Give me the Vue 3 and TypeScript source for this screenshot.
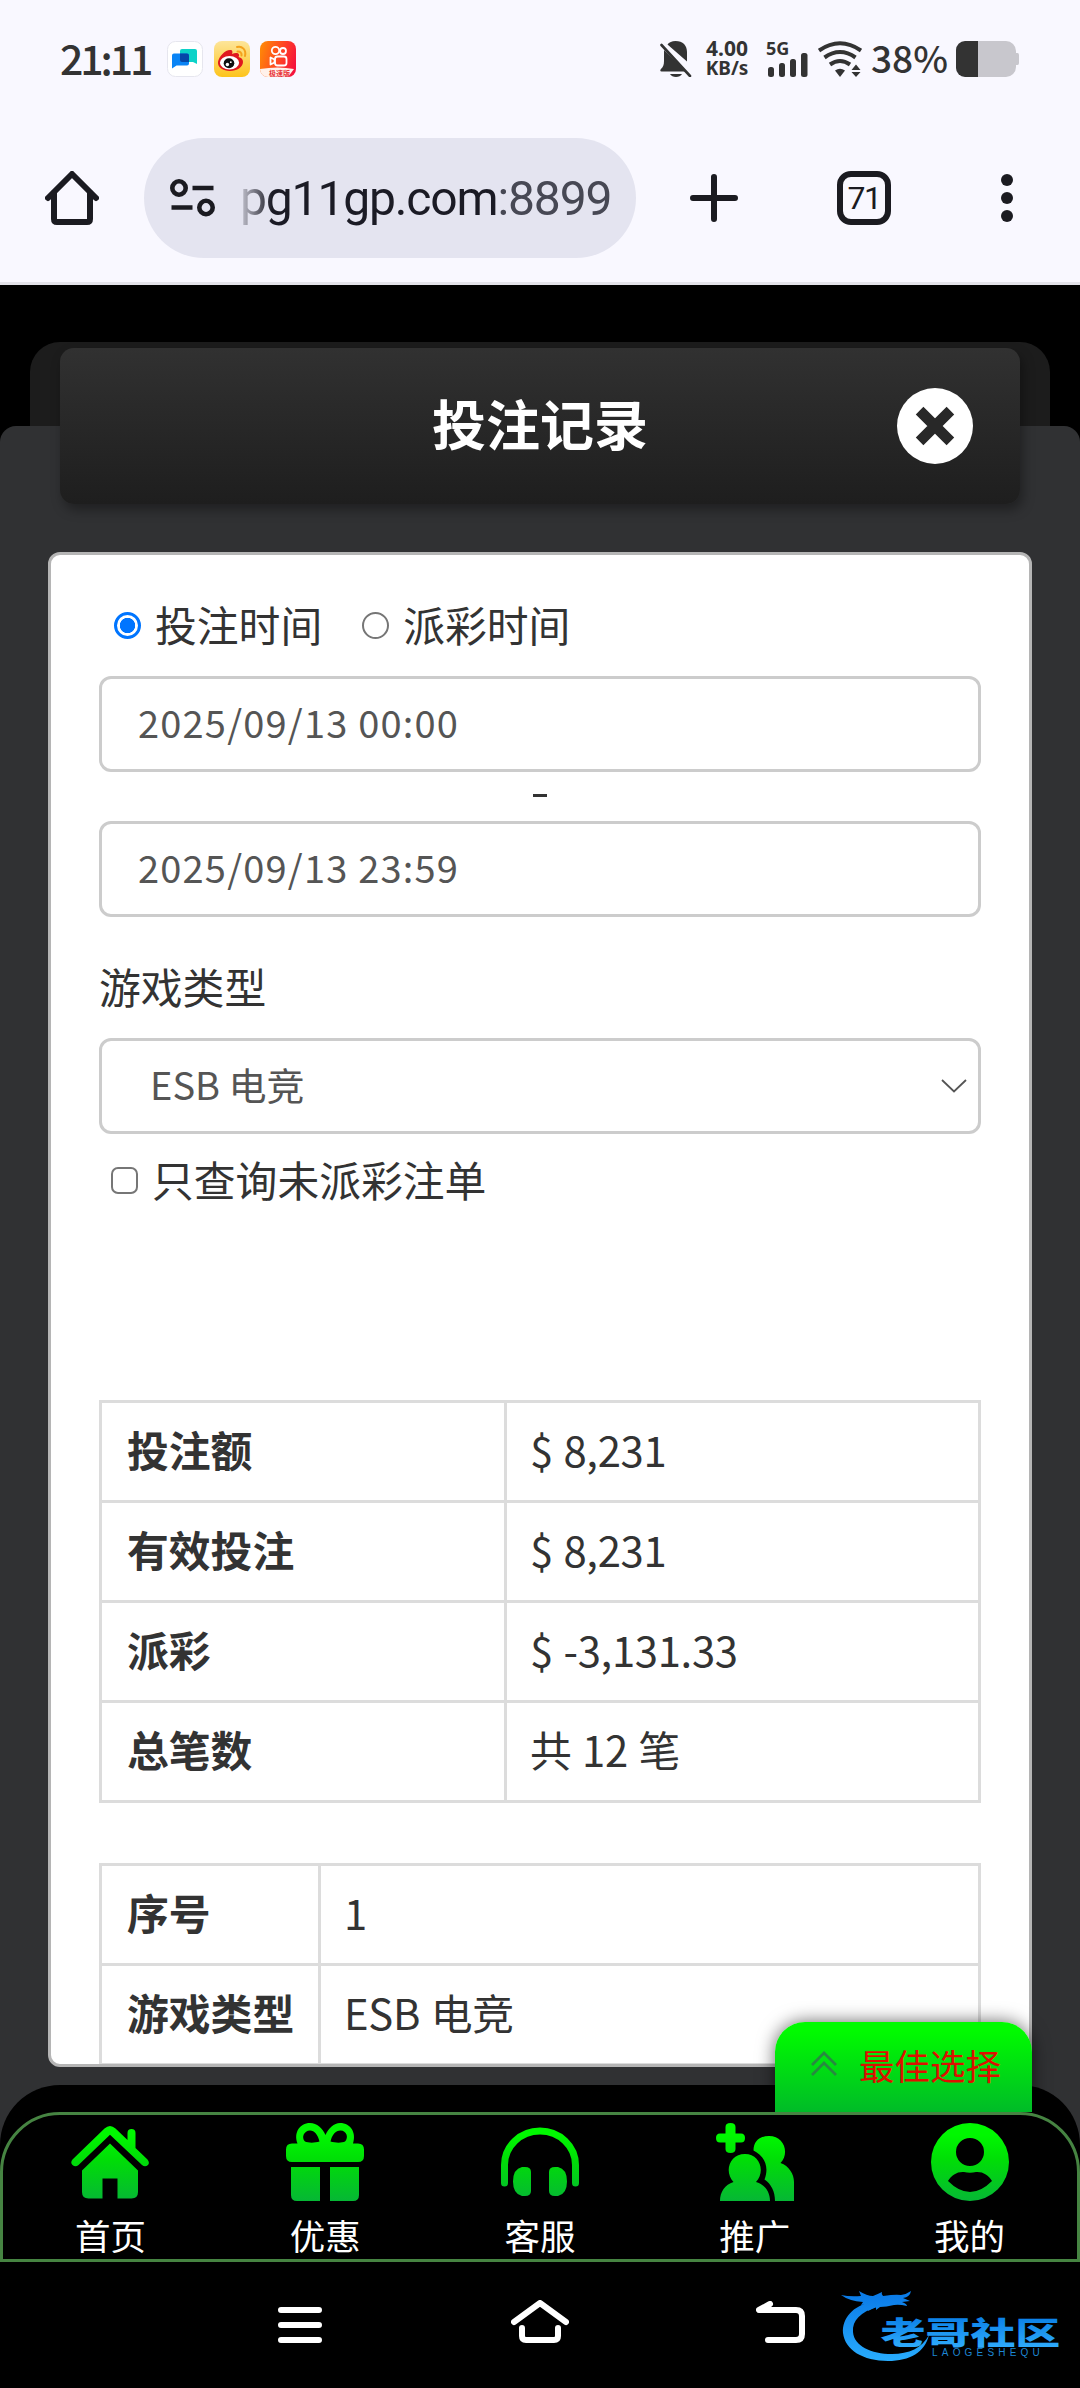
<script setup lang="ts">
import { ref } from 'vue'

interface Row {
  label: string
  value: string
}

const timeMode = ref<'bet' | 'payout'>('bet')
const unpaidOnly = ref(false)

const summary: Row[] = [
  { label: '投注额', value: '$ 8,231' },
  { label: '有效投注', value: '$ 8,231' },
  { label: '派彩', value: '$ -3,131.33' },
  { label: '总笔数', value: '共 12 笔' },
]

const record: Row[] = [
  { label: '序号', value: '1' },
  { label: '游戏类型', value: 'ESB 电竞' },
]

const tabs: { icon: string; label: string }[] = [
  { icon: 'home', label: '首页' },
  { icon: 'gift', label: '优惠' },
  { icon: 'service', label: '客服' },
  { icon: 'promote', label: '推广' },
  { icon: 'mine', label: '我的' },
]
</script>

<template>
  <div class="screen">
    <header class="chrome">
      <div class="status">
        <span class="clock">21:11</span>
        <svg class="app-icon" viewBox="0 0 36 36">
          <rect x="0.5" y="0.5" width="35" height="35" rx="8" fill="#fff" stroke="#e6e6ee" />
          <path d="M15 8h13a2 2 0 0 1 2 2v13l-4-2H15a2 2 0 0 1-2-2v-9a2 2 0 0 1 2-2z" fill="#0cd2c8" />
          <path d="M7 12.500h13a2 2 0 0 1 2 2v8a2 2 0 0 1-2 2H9.500L5 27.500v-13a2 2 0 0 1 2-2z" fill="#0a84f5" />
          <path d="M13 12.500h7a2 2 0 0 1 2 2V21h-7a2 2 0 0 1-2-2z" fill="#0547a8" />
        </svg>
        <svg class="app-icon" viewBox="0 0 36 36">
          <defs>
            <linearGradient id="wb" x1="0" y1="0" x2="0" y2="1">
              <stop offset="0" stop-color="#fde59a" />
              <stop offset="1" stop-color="#fdc41c" />
            </linearGradient>
          </defs>
          <rect width="36" height="36" rx="8" fill="url(#wb)" />
          <path d="M4 21c1-6 8-13 13-12 2 .6 1.500 3 1 4 3-1.500 7-1.500 7 1 0 1 0 1.500-.5 2 3 .8 4.500 2.500 4.500 5 0 5-6 9-13 9-7 0-12.500-3.500-12-9z" fill="#e0181e" />
          <ellipse cx="15.500" cy="21.800" rx="9.600" ry="6.700" fill="#fff" />
          <ellipse cx="15" cy="22.300" rx="5.300" ry="5" fill="#111" />
          <circle cx="13.400" cy="23.500" r="1.700" fill="#fff" />
          <circle cx="16.800" cy="21.200" r="0.900" fill="#fff" />
          <path d="M23 6c5-1.500 9.500 3 8 9M23.500 10.500c2.500-.5 4.500 1.500 4 4" fill="none" stroke="#f4a21c" stroke-width="2" stroke-linecap="round" />
        </svg>
        <svg class="app-icon" viewBox="0 0 36 36">
          <defs>
            <linearGradient id="ks" x1="0" y1="0.300" x2="1" y2="0.600">
              <stop offset="0" stop-color="#ff8508" />
              <stop offset="0.600" stop-color="#ff3f26" />
              <stop offset="1" stop-color="#f5133c" />
            </linearGradient>
            <clipPath id="ksc"><rect width="36" height="36" rx="8" /></clipPath>
          </defs>
          <g clip-path="url(#ksc)">
            <rect width="36" height="36" fill="url(#ks)" />
            <path d="M0 28q18-3 34 0l-6 8H0z" fill="#fff1ea" />
            <g fill="none" stroke="#fff" stroke-width="1.800">
              <circle cx="15.500" cy="9.500" r="3.700" />
              <circle cx="23" cy="10" r="3" />
              <rect x="15" y="15.500" width="11.500" height="9" rx="2.500" />
              <path d="M14.500 18.500l-4-2v7l4-2z" stroke-linejoin="round" />
            </g>
            <text x="9" y="34.500" class="ks-label">极速版</text>
          </g>
        </svg>
        <span class="grow"></span>
        <svg class="bell" viewBox="0 0 32 36">
          <path d="M7.500 3.500C9 1.500 12 0 15.500 0 23 0 27 4.500 27 11v9.500zM4 9l22 21.500H1.500C0 30.500 0 29 1 28c2-2 3-4 3-8zM10 33h12c-1 2-3.500 3-6 3s-5-1-6-3z" fill="#333" />
          <path d="M1.500 4l28.500 31" stroke="#333" stroke-width="2.600" stroke-linecap="round" />
        </svg>
        <div class="speed"><span>4.00</span><span class="unit">KB/s</span></div>
        <div class="signal">
          <span>5G</span>
          <svg viewBox="0 0 40 24">
            <g fill="#333">
              <rect x="0" y="14" width="6" height="10" rx="2.500" />
              <rect x="11" y="10" width="6" height="14" rx="2.500" />
              <rect x="22" y="6" width="6" height="18" rx="2.500" />
              <rect x="33" y="0" width="6.500" height="24" rx="2.500" />
            </g>
          </svg>
        </div>
        <svg class="wifi" viewBox="0 0 44 36">
          <g fill="none" stroke="#333" stroke-width="4">
            <path d="M1 9.500Q22-5 43 9.500" />
            <path d="M6.500 16.500Q22 5.500 37.500 16.500" />
            <path d="M12 23.500Q22 16.500 32 23.500" />
          </g>
          <path d="M17 29.500q5-3.500 10 0L22 36z" fill="#333" />
          <path d="M33.500 29h9L38 23.500zM33.500 31h9L38 36z" fill="#333" />
        </svg>
        <span class="percent">38%</span>
        <svg class="battery" viewBox="0 0 63 36">
          <path d="M22 0h28a10 10 0 0 1 10 10v2h1.500q1.500 0 1.500 2v8q0 2-1.500 2H60v2a10 10 0 0 1-10 10H22z" fill="#c8c7cd" />
          <path d="M22 0v36H9a9 9 0 0 1-9-9V9a9 9 0 0 1 9-9z" fill="#333" />
        </svg>
      </div>

      <div class="toolbar">
        <svg class="tb-home" viewBox="0 0 54 54" fill="none" stroke="#1b1b21" stroke-width="6" stroke-linecap="round" stroke-linejoin="round">
          <path d="M3 27L27 3l24 24" />
          <path d="M9 22v26q0 3 3 3h30q3 0 3-3V22" />
        </svg>
        <div class="omnibox">
          <svg class="tune" viewBox="0 0 46 40" fill="none" stroke="#1b1b21">
            <circle cx="9" cy="10" r="6.700" stroke-width="4.600" />
            <circle cx="36" cy="29.500" r="6.700" stroke-width="4.600" />
            <path d="M22.500 10h21M1.500 29.500h21" stroke-width="4.600" />
          </svg>
          <span class="url">pg11gp.com<span class="port">:8899</span></span>
        </div>
        <svg class="plus" viewBox="0 0 48 48" stroke="#1b1b21" stroke-width="6" stroke-linecap="round">
          <path d="M24 3v42M3 24h42" />
        </svg>
        <div class="tab-count">71</div>
        <div class="dots"><i></i><i></i><i></i></div>
      </div>
    </header>

    <main class="page">
      <div class="back-sheet"></div>
      <div class="sheet">
        <div class="title-card">
          <h1>投注记录</h1>
          <svg class="close" viewBox="0 0 76 76">
            <circle cx="38" cy="38" r="38" fill="#fff" />
            <path d="M24.500 24.500l27 27M51.500 24.500l-27 27" stroke="#282828" stroke-width="12.500" stroke-linecap="square" transform="translate(38 38) scale(.86) translate(-38 -38)" />
          </svg>
        </div>

        <section class="card">
          <div class="radios">
            <label @click="timeMode = 'bet'"><i class="radio" :class="{ on: timeMode === 'bet' }"></i><span>投注时间</span></label>
            <label @click="timeMode = 'payout'"><i class="radio" :class="{ on: timeMode === 'payout' }"></i><span>派彩时间</span></label>
          </div>
          <div class="field date">2025/09/13 00:00</div>
          <div class="dash"><i></i></div>
          <div class="field date">2025/09/13 23:59</div>
          <div class="label">游戏类型</div>
          <div class="field select">
            <span>ESB 电竞</span>
            <svg viewBox="0 0 26 14" fill="none" stroke="#555" stroke-width="1.800"><path d="M1 1l12 11.500L25 1" /></svg>
          </div>
          <label class="check" @click="unpaidOnly = !unpaidOnly"><i :class="{ on: unpaidOnly }"></i><span>只查询未派彩注单</span></label>

          <table class="summary">
            <tr v-for="row in summary" :key="row.label"><th>{{ row.label }}</th><td>{{ row.value }}</td></tr>
          </table>
          <table class="record">
            <tr v-for="row in record" :key="row.label"><th>{{ row.label }}</th><td>{{ row.value }}</td></tr>
          </table>
        </section>
      </div>

      <div class="bottom">
        <div class="best">
          <svg viewBox="0 0 26 26" fill="none" stroke="#278a40" stroke-width="2.800"><path d="M1 14L13 2l12 12M1 24l12-12 12 12" /></svg>
          <span>最佳选择</span>
        </div>
        <nav class="tabs">
          <div v-for="tab in tabs" :key="tab.label" class="tab">
            <svg viewBox="0 0 78 78">
              <defs>
                <linearGradient :id="'g-' + tab.icon" gradientUnits="userSpaceOnUse" x1="0" y1="0" x2="0" y2="78">
                  <stop offset="0.150" stop-color="#00f800" />
                  <stop offset="0.480" stop-color="#00dd07" />
                  <stop offset="1" stop-color="#06b735" />
                </linearGradient>
              </defs>
              <g v-if="tab.icon === 'home'" :fill="'url(#g-' + tab.icon + ')'">
                <path d="M1.500 36.500L33.500 5.500q5.500-5 11 0l12 11.500V10q0-4 4-4t4 4v15l12 11.500q2.500 3 .5 5.500-3 2.500-6 0L39 11.800 7.500 42q-3 2.500-6 0-2.500-2.500 0-5.500z" />
                <path d="M39 20.500l28 27V69q0 6.500-6.500 6.500H46.500V55.500h-15v20H17.500Q11 75.500 11 69V47.500z" />
              </g>
              <g v-else-if="tab.icon === 'gift'" :fill="'url(#g-' + tab.icon + ')'">
                <path fill-rule="evenodd" d="M11.500 20.500C7.500 10 13.500 0 24 0c7 0 12.500 5 15.500 12C42.500 5 48 0 54 0c11 0 16.500 10 13 20.500H72q6 0 6 6V33q0 6-6 6H6q-6 0-6-6v-6.500q0-6 6-6zM24 7.500c-6 0-9 7-5 11 3 1.500 10 1.500 14.500 0C32 12 28.500 7.500 24 7.500zM54.500 7.500c-5 0-8.500 4.500-10 11 4.500 1.500 12 1.500 14.500 0 4-4 1.500-11-4.500-11z" />
                <path d="M5 44h29v34H11q-6 0-6-6zM44 44h29v28q0 6-6 6H44z" />
              </g>
              <g v-else-if="tab.icon === 'service'">
                <path d="M3.500 60V42a35.500 34 0 0 1 71 0v18" fill="none" :stroke="'url(#g-' + tab.icon + ')'" stroke-width="7" stroke-linecap="round" />
                <path d="M21 44h3q6 0 6 5v19q0 5-6 5h-3q-9-2-9-14.500T21 44zM57 44h-3q-6 0-6 5v19q0 5 6 5h3q9-2 9-14.500T57 44z" :fill="'url(#g-' + tab.icon + ')'" />
              </g>
              <g v-else-if="tab.icon === 'promote'" :fill="'url(#g-' + tab.icon + ')'">
                <path d="M9.500 4q0-4 5-4t5 4v6.500H25q4 0 4 4.500t-4 4.500h-5.500V26q0 4-5 4t-5-4v-6.500H4q-4 0-4-4.500t4-4.500h5.500z" />
                <path d="M37.500 27.500C37.500 18 44 13 53 13c15 0 21 17 11.500 27C73 43 78 51 78 59v19H59c0-10-4-17-10.500-21.500 5-13 0-23.500-11-29z" />
                <path d="M29 31c14.500 0 21 17 11 28 8.500 2.500 14 9.500 14 19H4c0-9 5-16.500 13.500-19C7.500 48 14 31 29 31z" />
              </g>
              <path v-else fill-rule="evenodd" :fill="'url(#g-' + tab.icon + ')'" d="M39 0a39 39 0 0 1 0 78 39 39 0 0 1 0-78zM39 15a13.700 13.700 0 0 0 0 28 13.700 13.700 0 0 0 0-28zM17 58q22 22 44 0c-3.500-6-9-9.500-16-9q-6 1.500-12 0c-7-.5-12.500 3-16 9z" />
            </svg>
            <span>{{ tab.label }}</span>
          </div>
        </nav>
      </div>
    </main>

    <footer class="sysnav">
      <svg class="nav-menu" viewBox="0 0 44 36" stroke="#fff" stroke-width="6" stroke-linecap="round"><path d="M3 3h38M3 18h38M3 33h38" /></svg>
      <svg class="nav-home" viewBox="0 0 58 43" fill="none" stroke="#fff" stroke-width="6" stroke-linecap="round" stroke-linejoin="round">
        <path d="M3 22L29 3l26 19M11 28v8q0 4 4 4h28q4 0 4-4v-8" />
      </svg>
      <svg class="nav-back" viewBox="0 0 49 42" fill="none" stroke="#fff" stroke-width="6" stroke-linecap="round" stroke-linejoin="round">
        <path d="M14 3L3 9h37q6 0 6 6v18q0 6-6 6H12" />
      </svg>
      <svg class="mark" viewBox="0 0 226 80">
        <defs>
          <linearGradient id="mk" gradientUnits="userSpaceOnUse" x1="0" y1="5" x2="0" y2="75">
            <stop offset="0" stop-color="#0b7ce8" />
            <stop offset="1" stop-color="#2bb0ff" />
          </linearGradient>
          <linearGradient id="mt" x1="0" y1="0" x2="0" y2="1">
            <stop offset="0.200" stop-color="#0a7fe6" />
            <stop offset="1" stop-color="#35b2ff" />
          </linearGradient>
        </defs>
        <g fill="url(#mk)">
          <path d="M30 11C12 15 1 27 2 42c2 17 20 28 45 28 22 0 37-9 41-26-7 13-20 19-37 19-21 0-38-8-39-22-1-12 8-20 24-25z" />
          <path d="M0 4q9 2 20 1l-2-5q8 5 14 5 5-2 9-4-1 2 1 4 13-2 18-1 6-1 10-4-1 6-8 7l7 3-8 1q5 2 5 4-8-2-13-1-8 2-14 2l-4 3v-3l-8 4 1-4-6 1 4-4-6 1 2-3Q8 10 0 4z" />
        </g>
        <text class="mark-cn" transform="translate(39.5 52.5) scale(1.450 1)" fill="url(#mt)">老哥社区</text>
        <text class="mark-en" x="91" y="64.500" fill="#1d86d2">LAOGESHEQU</text>
      </svg>
    </footer>
  </div>
</template>

<style>
body {
  margin: 0;
  background: #000;
}
</style>

<style scoped>
.screen {
  width: 1080px;
  height: 2388px;
  display: flex;
  flex-direction: column;
  overflow: hidden;
  background: #000;
  color: #333;
  font-family: "Noto Sans CJK SC", "Noto Sans", sans-serif;
}
svg {
  display: block;
  flex: none;
}
.chrome {
  box-sizing: border-box;
  height: 285px;
  border-bottom: 3px solid #e3e2e9;
  background: #f9f8ff;
}
.status {
  display: flex;
  align-items: center;
  height: 118px;
  padding: 0 60px;
}
.clock {
  width: 107px;
  margin-top: -5px;
  font: 500 41px/60px "Noto Sans CJK SC", sans-serif;
  letter-spacing: -3.100px;
}
.app-icon {
  width: 36px;
  height: 36px;
  margin-right: 10.500px;
}
.ks-label {
  font: 700 7px "Noto Sans CJK SC", sans-serif;
  fill: #e8353b;
}
.grow {
  flex: 1;
}
.bell {
  width: 32px;
  height: 36px;
}
.speed {
  width: 50px;
  margin: -2px 0 0 10px;
  display: flex;
  flex-direction: column;
  align-items: center;
  font: 700 21px/20px "Noto Sans", sans-serif;
}
.unit {
  font-size: 19px;
}
.signal {
  width: 42px;
  height: 36px;
  margin-left: 14px;
  position: relative;
  font: 700 18px/14px "Noto Sans", sans-serif;
}
.signal span {
  display: block;
}
.signal svg {
  position: absolute;
  left: 2px;
  bottom: 0;
  width: 40px;
  height: 24px;
}
.wifi {
  width: 44px;
  height: 36px;
  margin-left: 10px;
}
.percent {
  width: 76px;
  margin: -4px 0 0 9px;
  font: 500 37px/50px "Noto Sans CJK SC", sans-serif;
}
.battery {
  width: 63px;
  height: 36px;
  margin-left: 9px;
  margin-right: 1px;
}
.toolbar {
  display: flex;
  align-items: center;
  height: 160px;
  padding-left: 45px;
}
.tb-home {
  width: 54px;
  height: 54px;
}
.omnibox {
  box-sizing: border-box;
  display: flex;
  align-items: center;
  width: 492px;
  height: 120px;
  margin-left: 45px;
  padding-left: 26px;
  border-radius: 60px;
  background: #e4e4f0;
}
.tune {
  width: 46px;
  height: 40px;
}
.url {
  margin: 1px 0 0 24px;
  font: 400 48px/60px Roboto, sans-serif;
  letter-spacing: -1.150px;
  color: #1b1b25;
  mask-image: linear-gradient(90deg, rgba(0, 0, 0, 0.15), #000 32px);
}
.port {
  color: #474854;
}
.plus {
  width: 48px;
  height: 48px;
  margin-left: 54px;
}
.tab-count {
  box-sizing: border-box;
  width: 54px;
  height: 54px;
  margin-left: 99px;
  border: 6px solid #1b1b21;
  border-radius: 14px;
  font: 400 32px/43px Roboto, sans-serif;
  letter-spacing: -1.500px;
  text-align: center;
  color: #1b1b21;
}
.dots {
  display: flex;
  flex-direction: column;
  gap: 6px;
  margin-left: 110px;
}
.dots i {
  width: 12px;
  height: 12px;
  border-radius: 50%;
  background: #1b1b21;
}

.page {
  position: relative;
  height: 1977px;
  padding-top: 57px;
  box-sizing: border-box;
}
.back-sheet {
  height: 84px;
  margin: 0 30px;
  border-radius: 30px 30px 0 0;
  background: #1c1c1c;
}
.sheet {
  height: 1836px;
  border-radius: 16px 16px 0 0;
  background: #303133;
}
.title-card {
  position: relative;
  top: -78px;
  height: 156px;
  margin: 0 60px -30px;
  display: flex;
  align-items: center;
  justify-content: center;
  border-radius: 14px;
  background: linear-gradient(#313131, #1e1e1e);
  box-shadow: 3px 6px 12px rgba(0, 0, 0, 0.35);
}
h1 {
  margin: -7px 0 0;
  font-size: 54px;
  line-height: 80px;
  font-weight: 700;
  color: #fff;
}
.close {
  position: absolute;
  right: 47px;
  top: 40px;
  width: 76px;
  height: 76px;
}
.card {
  box-sizing: border-box;
  height: 1515px;
  margin: 0 48px;
  padding: 45px 48px 0;
  overflow: hidden;
  border: 3px solid #b5b5b5;
  border-radius: 12px;
  background: #fff;
  font-size: 41.800px;
}
.radios,
.radios label,
.check {
  display: flex;
  align-items: center;
}
.radios {
  height: 52px;
  padding-left: 15px;
  gap: 40px;
  line-height: 52px;
  margin-bottom: 24px;
}
.radio {
  box-sizing: border-box;
  width: 27px;
  height: 27px;
  margin-right: 14px;
  border: 2.500px solid #767676;
  border-radius: 50%;
}
.radio.on {
  border: 3.500px solid #0075ff;
  background: radial-gradient(circle, #0075ff 7.300px, #fff 8px);
}
.radios label {
  margin-top: -1px;
}
.radios label span {
  margin-top: -3px;
}
.field {
  box-sizing: border-box;
  display: flex;
  align-items: center;
  height: 96px;
  border: 3px solid #ccc;
  border-radius: 12px;
  color: #555;
  font-size: 38px;
}
.date {
  padding: 0 0 5px 36px;
  letter-spacing: 1.200px;
}
.dash {
  display: flex;
  align-items: center;
  justify-content: center;
  height: 49px;
}
.dash i {
  width: 14px;
  height: 3px;
  margin-top: -3px;
  background: #333;
}
.label {
  height: 52px;
  margin: 43px 0 26px;
  line-height: 52px;
}
.select {
  justify-content: space-between;
  padding: 0 11px 5px 48px;
}
.select svg {
  width: 26px;
  height: 14px;
  margin-top: 4px;
}
.check {
  height: 52px;
  margin-top: 20px;
  padding-left: 12px;
}
.check i {
  box-sizing: border-box;
  width: 27px;
  height: 27px;
  margin-right: 14px;
  border: 2.500px solid #767676;
  border-radius: 7px;
}
.check i.on {
  background: #0075ff;
}
.check span {
  margin-top: -3px;
}
table {
  box-sizing: border-box;
  width: 882px;
  border-spacing: 0;
  table-layout: fixed;
  border-right: 3px solid #dcdcdc;
  border-bottom: 3px solid #dcdcdc;
}
th,
td {
  box-sizing: border-box;
  height: 100px;
  padding: 0 0 6px 24px;
  border-top: 3px solid #dcdcdc;
  border-left: 3px solid #dcdcdc;
  text-align: left;
  line-height: 60px;
}
th {
  padding-left: 25px;
}
td {
  padding-left: 23px;
  letter-spacing: -0.300px;
  word-spacing: 1.500px;
}
.summary {
  margin-top: 194px;
}
.summary th {
  width: 405px;
}
.record {
  margin-top: 60px;
}
.record th {
  width: 219px;
}

/* Tab bar floats over the lower edge of the sheet */
.bottom {
  position: absolute;
  left: 0;
  right: 0;
  bottom: 0;
  padding-top: 27px;
  border-radius: 60px 60px 0 0;
  background: #000;
}
.best {
  position: absolute;
  right: 48px;
  bottom: 150px;
  box-sizing: border-box;
  width: 257px;
  height: 90px;
  display: flex;
  align-items: center;
  padding: 0 0 0 36px;
  border-radius: 30px 30px 0 0;
  background: linear-gradient(#00fb00 10%, #00bb28);
  box-shadow: 0 0 18px rgba(0, 0, 0, 0.6);
  clip-path: inset(-30px -30px 0 -30px);
  color: #dc1000;
  font-size: 35.500px;
}
.best svg {
  width: 26px;
  height: 26px;
  margin-top: -7px;
}
.best span {
  margin: -5px 0 0 22px;
}
.tabs {
  box-sizing: border-box;
  display: flex;
  height: 150px;
  border: 3px solid #468442;
  border-radius: 60px 60px 0 0;
}
.tab {
  flex: 1;
  display: flex;
  flex-direction: column;
  align-items: center;
  padding-top: 8px;
  color: #fff;
  font-size: 35.500px;
  line-height: 50px;
}
.tab svg {
  width: 78px;
  height: 78px;
}
.tab span {
  margin-top: 9px;
}

.sysnav {
  display: flex;
  align-items: flex-start;
  height: 126px;
}
.nav-menu {
  width: 46px;
  height: 36px;
  margin: 45px 0 0 277px;
}
.nav-home {
  width: 58px;
  height: 43px;
  margin: 38px 0 0 188px;
}
.nav-back {
  width: 49px;
  height: 42px;
  margin: 39px 0 0 187px;
}
.mark {
  width: 226px;
  height: 80px;
  margin: 29px 0 0 36px;
}
.mark-cn {
  font: 900 31px "Noto Sans CJK SC", sans-serif;
}
.mark-en {
  font: 400 10px "Liberation Sans", sans-serif;
  letter-spacing: 4.200px;
}
</style>
